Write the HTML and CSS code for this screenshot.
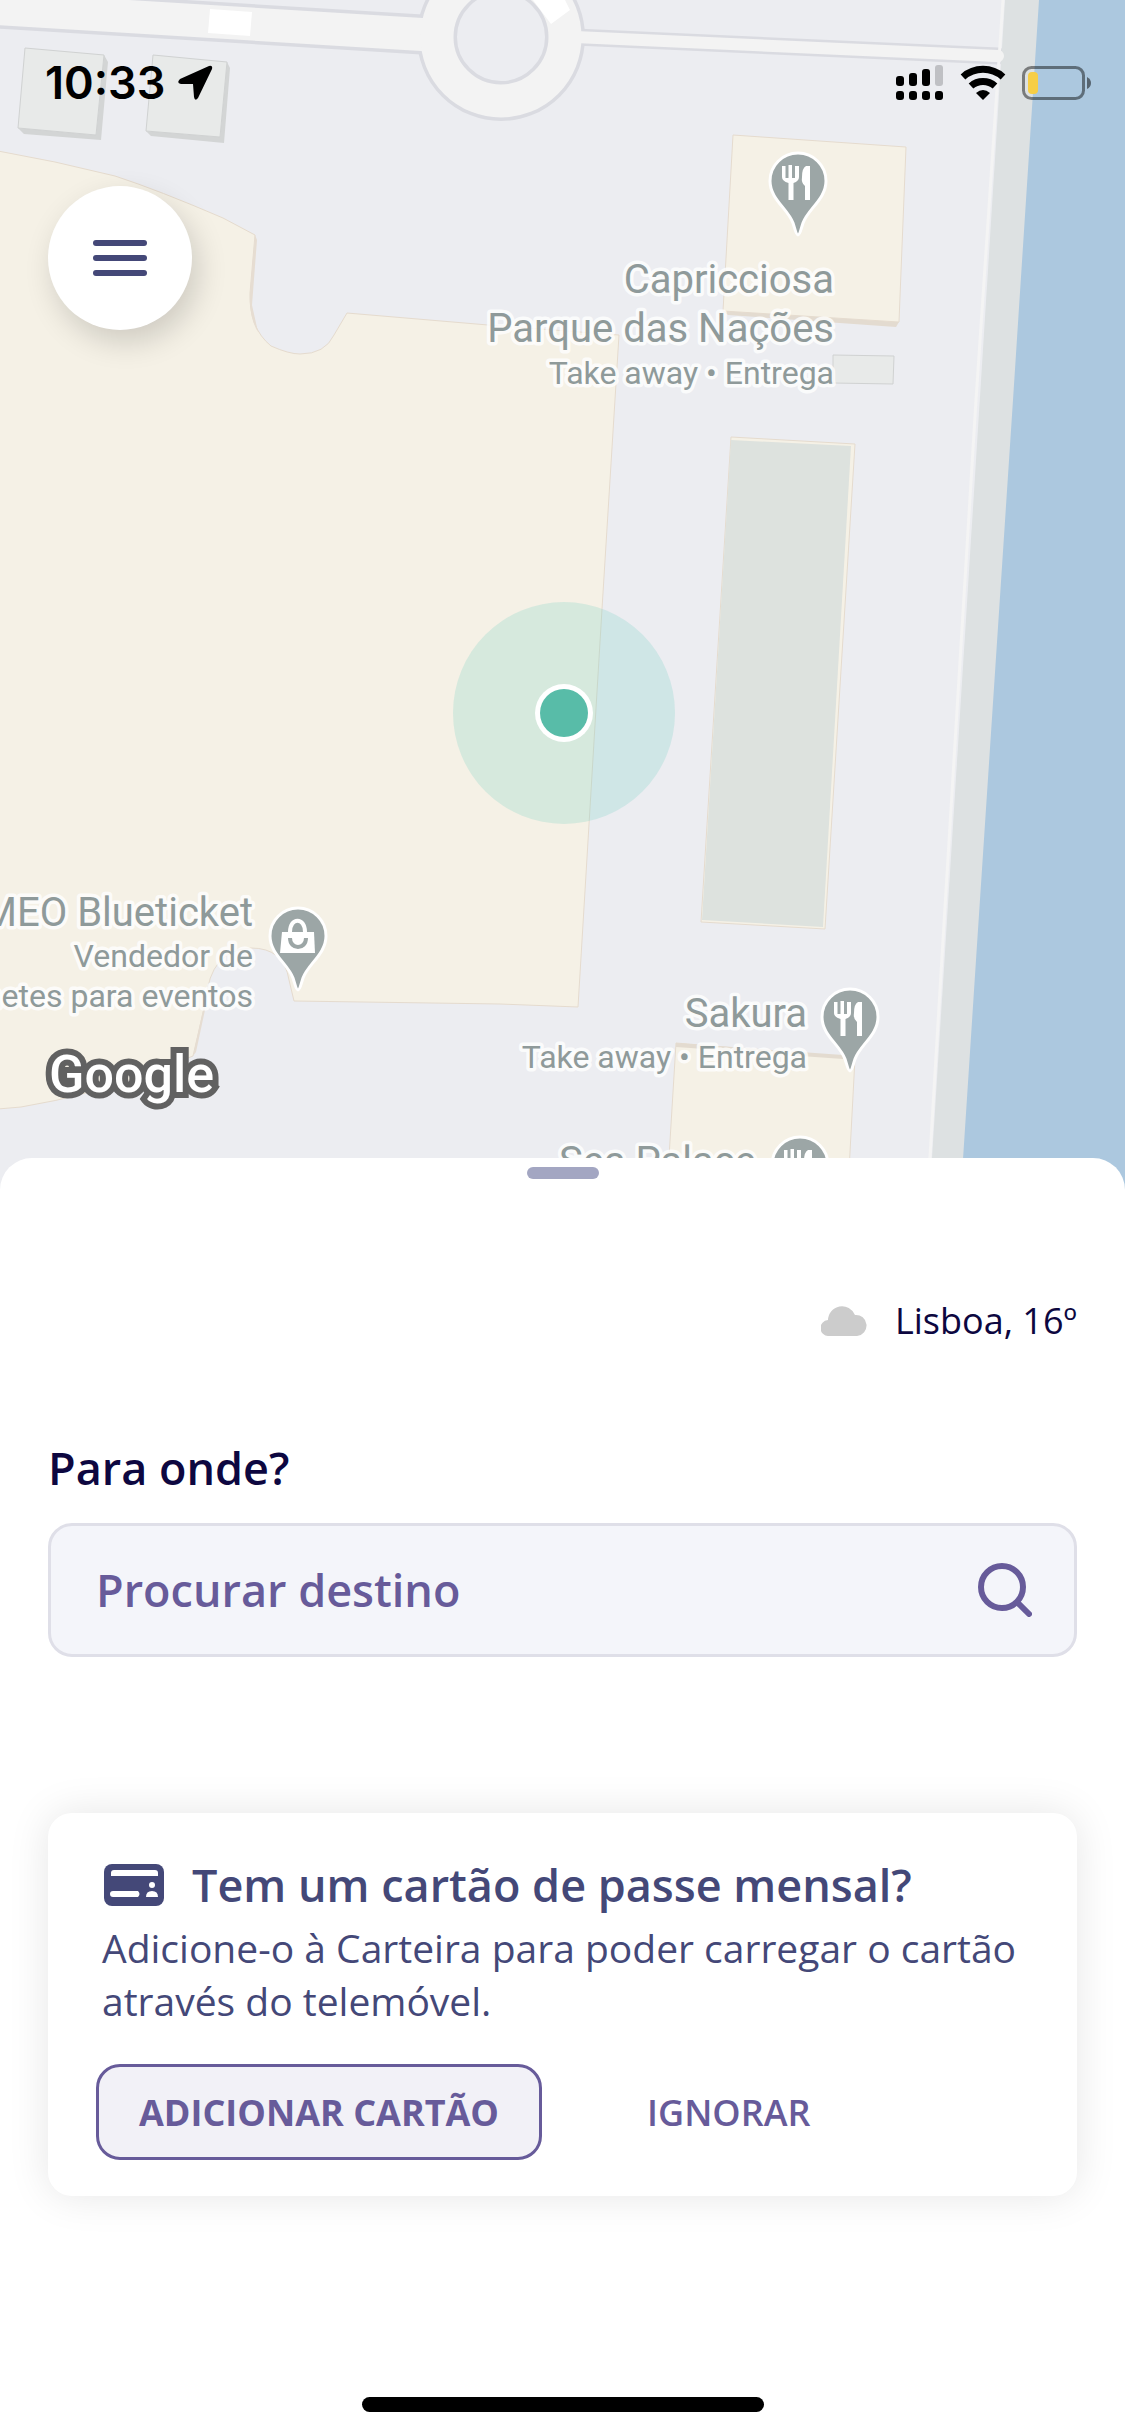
FILE: index.html
```html
<!DOCTYPE html>
<html lang="pt">
<head>
    <meta charset="UTF-8">
    <meta name="viewport" content="width=device-width, initial-scale=1.0">
    <title>Para onde?</title>
    <link rel="stylesheet" href="styles.css">
</head>
<body>
    <main class="app">
        <section class="map">
            <svg class="map-canvas" viewBox="0 0 1125 1190" role="img" aria-label="Mapa">
                <defs>
                    <g id="pin">
                        <path class="pin-shape" d="M0 84 C-2 84 -3 78 -5 72 C-10 58 -28 48 -28 30 A28 28 0 0 1 28 30 C28 48 10 58 5 72 C3 78 2 84 0 84 Z"/>
                    </g>
                    <g id="food" fill="#fff">
                        <path d="M-16 16 H-12.500 V28 H-9.500 V15 H-6 V28 H-3 V16 H1 V27 Q1 31 -4.500 33 V50 H-9.500 V33 Q-16 31 -16 27 Z"/>
                        <path d="M12 16 V50 H7 V36 Q3 33 4 27 Q4 18 8 16 Z"/>
                    </g>
                </defs>
                <rect width="1125" height="1190" fill="#ecedf1"/>

                <!-- roads -->
                <path d="M-10 8 L430 35" fill="none" stroke="#dadbe1" stroke-width="40"/>
                <path d="M575 37 L998 56" fill="none" stroke="#dadbe1" stroke-width="17" stroke-linecap="round"/>
                <circle cx="501" cy="37" r="64" fill="none" stroke="#dadbe1" stroke-width="40"/>
                <path d="M-10 8 L430 35" fill="none" stroke="#f3f3f3" stroke-width="33"/>
                <circle cx="501" cy="37" r="64" fill="none" stroke="#f3f3f3" stroke-width="33"/>
                <path d="M575 37 L998 56" fill="none" stroke="#f3f3f3" stroke-width="12" stroke-linecap="round"/>
                <path d="M210 9 L252 12 L250 36 L208 33 Z M533 0 L551 24 L570 10 L565 0 Z" fill="#fff"/>

                <!-- river -->
                <path d="M1005 0 H1042 L966 1190 H930 Z" fill="#dde1e2"/>
                <path d="M1039 0 L1013 400 L976 960 L961 1190 H1125 V0 Z" fill="#acc8df"/>
                <path d="M1003 0 L976 400 L943 940 L928 1190" fill="none" stroke="#f4f4f4" stroke-width="3"/>
                <path d="M985 50 L998 50 A6 6 0 0 1 998 62 L985 61 Z" fill="#f3f3f3"/>

                <!-- buildings -->
                <path d="M18 128 L24 134 L101 140 L108 62 L104 55 L96 135 Z M146 131 L151 136 L224 143 L230 68 L227 62 L220 137 Z" fill="#d3d5d5"/>
                <path d="M25 48 L104 55 L96 135 L18 128 Z M153 55 L227 62 L220 137 L146 131 Z" fill="#e8eae9" stroke="#d0d2d2"/>
                <path class="building" d="M-2 151 L55 162 L115 176 Q158 190 223 218 L255 235 L250 293 Q249 328 271 346 Q289 354 300 354 Q325 354 334 335 L347 313 L488 325 L619 335 L602 609 L578 1007 L500 1004 L294 1001 L289 980 Q284 948 251 948 Q210 950 206 1000 L193 1056 L165 1067 Q90 1096 21 1107 L-2 1109 Z"/>
                <path d="M255 235 L250 293 Q249 318 258 332 L252 305 L257 240 Z M203 1010 L193 1056 L196 1052 L205 1010 Z" fill="#e6ddd2"/>
                <path d="M723 311 L728 315 L896 327 L899 322 Z" fill="#e3dbd0"/>
                <path class="building" d="M733 135 L906 147 L899 322 L723 311 Z"/>
                <path d="M833 355 L894 356 L893 384 L833 383 Z" fill="#e8eae9" stroke="#d0d2d2"/>
                <path class="building" d="M731 437 L855 444 L825 929 L701 922 Z"/>
                <path d="M731 440 L851 446 L823 927 L702 920 Z" fill="#dde2de"/>
                <path class="building" d="M676 1043 L855 1058 L848 1190 L667 1190 Z"/>
                <path d="M676 1043 L843 1055 V1059 L676 1047 Z" fill="#e3dbd0"/>

                <!-- current position -->
                <circle cx="564" cy="713" r="111" fill="#68cdbd" fill-opacity="0.22"/>
                <circle cx="564" cy="713" r="29" fill="#fff"/>
                <circle cx="564" cy="713" r="24" fill="#58bca8"/>

                <!-- places -->
                <g class="place">
                    <use href="#pin" x="798" y="151"/>
                    <use href="#food" x="798" y="150"/>
                    <text class="place-name" x="834" y="293">Capricciosa</text>
                    <text class="place-name" x="834" y="342">Parque das Nações</text>
                    <text class="place-info" x="834" y="384">Take away • Entrega</text>
                </g>
                <g class="place">
                    <use href="#pin" x="298" y="906"/>
                    <path d="M282 932 H314 L315 953 H280 Z" fill="#fff"/>
                    <path d="M290 932 C290 917 305 917 305 932" fill="none" stroke="#fff" stroke-width="4"/>
                    <path d="M290 938 C290 950 306 950 306 938" fill="none" stroke="#9ca6a6" stroke-width="4"/>
                    <text class="place-name" x="253" y="926">MEO Blueticket</text>
                    <text class="place-info" x="253" y="967">Vendedor de</text>
                    <text class="place-info" x="253" y="1007">Bilhetes para eventos</text>
                </g>
                <g class="place">
                    <use href="#pin" x="850" y="987"/>
                    <use href="#food" x="850" y="986"/>
                    <text class="place-name" x="807" y="1027">Sakura</text>
                    <text class="place-info" x="807" y="1068">Take away • Entrega</text>
                </g>
                <g class="place">
                    <use href="#pin" x="800" y="1135"/>
                    <use href="#food" x="800" y="1134"/>
                    <text class="place-name" x="756" y="1175">Sea Palace</text>
                </g>
                <text class="map-brand" x="49" y="1092">Google</text>
            </svg>

            <div class="map-overlay">
                <header class="status-bar">
                    <div class="status-group">
                        <span class="clock">10:33</span>
                        <svg width="36" height="36" viewBox="0 0 36 36">
                            <path d="M32 1 L3 14 Q-1 18 4 19 L16 19 L17 32 Q18 37 21 33 L35 4 Q36 0 32 1 Z"/>
                        </svg>
                    </div>
                    <div class="status-group status-icons">
                        <svg width="48" height="36" viewBox="0 0 48 36">
                            <g>
                                <rect x="0" y="11" width="8" height="10" rx="3"/>
                                <rect x="13" y="8" width="8" height="13" rx="3"/>
                                <rect x="26" y="4" width="8" height="17" rx="3"/>
                                <rect x="39" y="0" width="8" height="21" rx="3" fill="#bfc0c4"/>
                                <rect x="0" y="26" width="8" height="9" rx="3"/>
                                <rect x="13" y="26" width="8" height="9" rx="3"/>
                                <rect x="26" y="26" width="8" height="9" rx="3"/>
                                <rect x="39" y="26" width="8" height="9" rx="3"/>
                            </g>
                        </svg>
                        <svg width="46" height="36" viewBox="0 0 46 36">
                            <g fill="none" stroke="#000" stroke-width="7">
                                <path d="M3 12 A30 30 0 0 1 43 12"/>
                                <path d="M11 21 A18 18 0 0 1 35 21"/>
                            </g>
                            <path d="M16 28 Q23 22 30 28 L23 35 Z"/>
                        </svg>
                        <svg width="70" height="36" viewBox="0 0 70 36">
                            <rect x="1.500" y="2.500" width="60" height="31" rx="8" fill="none" stroke="#000" stroke-opacity="0.45" stroke-width="3"/>
                            <path d="M65 12 Q69 14 69 18 Q69 22 65 24 Z" fill-opacity="0.5"/>
                            <rect x="6" y="7" width="10" height="22" rx="4" fill="#f7ce46"/>
                        </svg>
                    </div>
                </header>
                <button class="menu-button" type="button" aria-label="Menu">
                    <svg width="54" height="36" viewBox="0 0 54 36" fill="#444878">
                        <rect width="54" height="6" rx="3"/>
                        <rect y="15" width="54" height="6" rx="3"/>
                        <rect y="30" width="54" height="6" rx="3"/>
                    </svg>
                </button>
            </div>
        </section>

        <section class="sheet">
            <div class="handle"></div>

            <div class="weather">
                <svg width="46" height="30" viewBox="0 0 46 30" fill="#cccccc">
                    <path d="M8 30 A8 8 0 0 1 7 14 A14 14 0 0 1 34 9 A10.500 10.500 0 0 1 36 30 Z"/>
                </svg>
                <span>Lisboa, 16º</span>
            </div>

            <form class="search">
                <label class="search-label" for="destination">Para onde?</label>
                <div class="search-box">
                    <input class="search-input" id="destination" type="text" placeholder="Procurar destino">
                    <svg width="54" height="54" viewBox="0 0 54 54" fill="none" stroke="#675b9a" stroke-width="6" stroke-linecap="round">
                        <circle cx="24" cy="24" r="21"/>
                        <path d="M40 40 L51 51"/>
                    </svg>
                </div>
            </form>

            <section class="card">
                <div class="card-header">
                    <svg width="60" height="42" viewBox="0 0 60 42">
                        <rect width="60" height="42" rx="8" fill="#444878"/>
                        <path d="M7 12 V9 Q7 6 10 6 H51 Q54 6 54 9 V12 Z M9 27 H34 Q37 30 34 33 H9 Q6 33 6 30 Q6 27 9 27 Z M42 33 Q42 27 48 27 Q54 27 54 33 Z" fill="#fff"/>
                        <circle cx="48" cy="21" r="3" fill="#fff"/>
                    </svg>
                    <h2 class="card-title">Tem um cartão de passe mensal?</h2>
                </div>
                <p class="card-text">Adicione-o à Carteira para poder carregar o cartão através do telemóvel.</p>
                <div class="card-actions">
                    <button class="btn btn-primary" type="button">ADICIONAR CARTÃO</button>
                    <button class="btn btn-plain" type="button">IGNORAR</button>
                </div>
            </section>

            <div class="home-indicator"></div>
        </section>
    </main>
</body>
</html>
```

FILE: styles.css
```css
* {
    box-sizing: border-box;
}
body {
    margin: 0;
    font-family: "Open Sans", sans-serif;
    background: #fff;
}
svg {
    flex: none;
}
.app {
    display: flex;
    flex-direction: column;
    min-height: 100vh;
}

/* Map */
.map {
    position: relative;
}
.map-canvas {
    display: block;
    width: 100%;
    height: auto;
}
.map-overlay {
    position: absolute;
    top: 0;
    left: 0;
    right: 0;
    padding: 54px 33px 0 45px;
}
.building {
    fill: #f5f1e6;
    stroke: #e5dbce;
    stroke-width: 1;
}
.pin-shape {
    fill: #9ca6a6;
    stroke: #fff;
    stroke-width: 3;
}
.place text {
    font-family: Roboto, sans-serif;
    fill: #8f9a9a;
    stroke: #fff;
    stroke-opacity: 0.8;
    stroke-width: 7;
    stroke-linejoin: round;
    paint-order: stroke;
    text-anchor: end;
}
.place .place-name {
    font-size: 40px;
}
.place .place-info {
    font-size: 32px;
}
.map-brand {
    font-family: Roboto, sans-serif;
    font-size: 52px;
    font-weight: 500;
    fill: #fff;
    stroke: #616161;
    stroke-width: 12;
    paint-order: stroke;
}

/* Status bar */
.status-bar {
    display: flex;
    justify-content: space-between;
    align-items: center;
    height: 57px;
}
.status-group {
    display: flex;
    align-items: center;
    gap: 12px;
}
.status-icons {
    gap: 16px;
}
.clock {
    font-family: Inter, sans-serif;
    font-size: 45px;
    font-weight: 600;
    line-height: 57px;
}
.menu-button {
    display: flex;
    align-items: center;
    justify-content: center;
    width: 144px;
    height: 144px;
    margin: 75px 0 0 3px;
    padding: 0;
    border: 0;
    border-radius: 50%;
    background: #fff;
    box-shadow: 6px 12px 30px rgba(0, 0, 0, 0.16);
}

/* Bottom sheet */
.sheet {
    position: relative;
    display: flex;
    flex: 1;
    flex-direction: column;
    margin-top: -32px;
    padding: 9px 48px 24px;
    border-radius: 32px 32px 0 0;
    background: #fff;
}
.handle {
    align-self: center;
    width: 72px;
    height: 12px;
    border-radius: 6px;
    background: #a3a6c2;
}
.weather {
    display: flex;
    align-items: center;
    justify-content: flex-end;
    gap: 28px;
    margin-top: 117px;
    font-size: 36px;
    line-height: 50px;
    color: #0d0740;
}
.search {
    margin-top: 92px;
}
.search-label {
    display: block;
    font-size: 45px;
    font-weight: 600;
    line-height: 60px;
    color: #0d0740;
}
.search-box {
    display: flex;
    align-items: center;
    height: 134px;
    margin-top: 25px;
    padding: 0 42px 0 45px;
    border: 3px solid #dfdfe8;
    border-radius: 24px;
    background: #f4f5fa;
}
.search-input {
    flex: 1;
    min-width: 0;
    padding: 0;
    border: 0;
    outline: 0;
    background: none;
    font: 600 45px/60px "Open Sans", sans-serif;
    color: #675b9a;
}
.search-input::placeholder {
    color: #675b9a;
    opacity: 1;
}

/* Monthly pass card */
.card {
    margin: 156px 0 48px;
    padding: 42px 48px 36px;
    border-radius: 24px;
    background: #fff;
    box-shadow: 0 0 42px rgba(0, 0, 0, 0.1);
    color: #444878;
}
.card-header {
    display: flex;
    align-items: center;
    gap: 28px;
    padding-left: 8px;
}
.card-title {
    margin: 0;
    font-size: 45px;
    font-weight: 600;
    line-height: 60px;
}
.card-text {
    margin: 6px 0 37px;
    padding-left: 6px;
    font-size: 39px;
    line-height: 53px;
}
.card-actions {
    display: flex;
    gap: 62px;
}
.btn {
    height: 96px;
    padding: 0 40px;
    border: 3px solid transparent;
    border-radius: 24px;
    background: none;
    font-family: "Open Sans", sans-serif;
    font-size: 36px;
    font-weight: 600;
    color: #675b9a;
}
.btn-primary {
    border-color: #675b9a;
    background: #f2f1f7;
    font-weight: 700;
}

.home-indicator {
    align-self: center;
    width: 402px;
    max-width: 40%;
    height: 15px;
    margin-top: auto;
    border-radius: 8px;
    background: #000;
}
```
